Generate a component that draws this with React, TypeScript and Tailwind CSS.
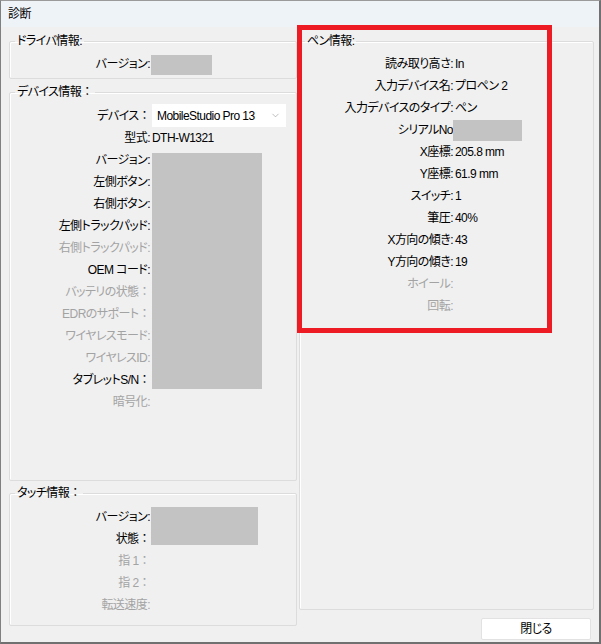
import { ChevronDown } from 'lucide-react'

type Line = { label: string; value?: string; dim?: boolean }

const deviceLines: Line[] = [
  { label: 'バージョン:' },
  { label: '左側ボタン:' },
  { label: '右側ボタン:' },
  { label: '左側トラックパッド:' },
  { label: '右側トラックパッド:', dim: true },
  { label: 'OEM コード:' },
  { label: 'バッテリの状態：', dim: true },
  { label: 'EDRのサポート：', dim: true },
  { label: 'ワイヤレスモード:', dim: true },
  { label: 'ワイヤレスID:', dim: true },
  { label: 'タブレットS/N：' },
  { label: '暗号化:', dim: true },
]

const touchLines: Line[] = [
  { label: 'バージョン:' },
  { label: '状態：' },
  { label: '指 1：', dim: true },
  { label: '指 2：', dim: true },
  { label: '転送速度:', dim: true },
]

const penLines: Line[] = [
  { label: '読み取り高さ:', value: 'In' },
  { label: '入力デバイス名:', value: 'プロペン 2' },
  { label: '入力デバイスのタイプ:', value: 'ペン' },
  { label: 'シリアルNo' },
  { label: 'X座標:', value: '205.8 mm' },
  { label: 'Y座標:', value: '61.9 mm' },
  { label: 'スイッチ:', value: '1' },
  { label: '筆圧:', value: '40%' },
  { label: 'X方向の傾き:', value: '43' },
  { label: 'Y方向の傾き:', value: '19' },
  { label: 'ホイール:', dim: true },
  { label: '回転:', dim: true },
]

// full-width colon keeps its spacing, the rest is set proportionally
const Text = ({ text }: { text: string }) =>
  text.endsWith('：') ? (
    <>
      {text.slice(0, -1)}
      <span className="[font-feature-settings:normal]">：</span>
    </>
  ) : (
    <>{text}</>
  )

const Group = ({
  title,
  className,
  children,
}: {
  title: string
  className: string
  children: React.ReactNode
}) => (
  <fieldset
    className={`rounded-[2px] border border-[#dcdcdc] shadow-[inset_1px_1px_0_#fff] ${className}`}
  >
    <legend className="ml-[5px] px-[2px] leading-[16px]">
      <Text text={title} />
    </legend>
    {children}
  </fieldset>
)

const Label = ({ line, width }: { line: Line; width: string }) => (
  <div
    className={`h-[22px] shrink-0 whitespace-nowrap text-right leading-[22px] ${width} ${
      line.dim ? 'text-[#a3a3a3]' : 'text-black'
    }`}
  >
    <Text text={line.label} />
  </div>
)

const App = () => {
  return (
    <div className="flex h-[644px] w-[601px] flex-col border-t border-r-2 border-b-2 border-l border-t-[#9a9a9a] border-r-[#707070] border-b-[#707070] border-l-[#808080] bg-[#f0f0f0] font-['Liberation_Sans','Noto_Sans_CJK_JP',sans-serif] text-[12px] tracking-[-0.55px] text-black [font-feature-settings:'palt']">
      <div className="flex h-[26px] shrink-0 items-center bg-[#eef3f8] pl-[7px]">
        診断
      </div>

      <div className="relative flex flex-1 gap-[2px] pt-[6px] pl-[8px]">
        {/* left column */}
        <div className="flex w-[288px] flex-col">
          <Group title="ドライバ情報:" className="h-[46px] pt-[4px]">
            <div className="flex">
              <Label line={{ label: 'バージョン:' }} width="w-[140px]" />
              <div className="mt-[2px] ml-[1px] h-[20px] w-[61px] bg-[#c3c3c3]" />
            </div>
          </Group>

          <Group title="デバイス情報：" className="mt-[5px] h-[397px] pt-[4px]">
            <div className="flex items-center">
              <Label line={{ label: 'デバイス：' }} width="w-[140px]" />
              <div className="ml-[2px] flex h-[23px] w-[134px] items-center justify-between bg-white pr-[5px] pl-[5px]">
                <span>MobileStudio Pro 13</span>
                <ChevronDown size={11} strokeWidth={1.2} className="text-[#8a8a8a]" />
              </div>
            </div>
            <div className="flex">
              <Label line={{ label: '型式:' }} width="w-[140px]" />
              <span className="ml-[2px] h-[22px] leading-[22px]">DTH-W1321</span>
            </div>
            <div className="flex">
              <div className="flex flex-col">
                {deviceLines.map((line) => (
                  <Label key={line.label} line={line} width="w-[140px]" />
                ))}
              </div>
              <div className="mt-[4px] ml-[2px] h-[236px] w-[110px] bg-[#c3c3c3]" />
            </div>
          </Group>

          <Group title="タッチ情報：" className="mt-[4px] h-[141px] pt-[5px]">
            <div className="flex">
              <div className="flex flex-col">
                {touchLines.map((line) => (
                  <Label key={line.label} line={line} width="w-[140px]" />
                ))}
              </div>
              <div className="mt-[1px] ml-[1px] h-[38px] w-[107px] bg-[#c3c3c3]" />
            </div>
          </Group>
        </div>

        {/* right column */}
        <div className="flex w-[295px] flex-col">
          <Group title="ペン情報:" className="h-[577px] pt-[4px]">
            <div className="flex flex-col">
              {penLines.map((line) => (
                <div key={line.label} className="flex">
                  <Label line={line} width="w-[153px]" />
                  {line.label === 'シリアルNo' ? (
                    <div className="mt-[1px] h-[21px] w-[69px] bg-[#c3c3c3]" />
                  ) : (
                    <span className="ml-[2px] h-[22px] leading-[22px] whitespace-nowrap">
                      {line.value}
                    </span>
                  )}
                </div>
              ))}
            </div>
          </Group>
          <div className="mt-[8px] flex justify-end pr-[3px]">
            <button className="h-[22px] w-[110px] rounded-[2px] border border-[#e2e2e2] bg-white text-[12px] leading-[20px]">
              閉じる
            </button>
          </div>
        </div>

        {/* highlight frame around the pen panel */}
        <div className="pointer-events-none absolute top-[-2px] left-[296px] h-[308px] w-[255px] border-[5px] border-[#ed1c24]" />
      </div>
    </div>
  )
}

export default App
